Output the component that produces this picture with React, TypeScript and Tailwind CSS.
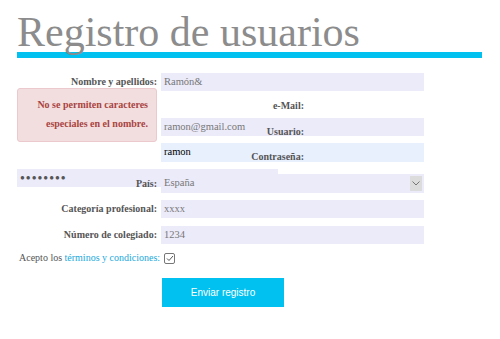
import React from "react";

const serifCls = "font-['Liberation_Serif','Times_New_Roman',serif]";

function Label({ children, className = "" }: { children: React.ReactNode; className?: string }) {
  return (
    <span className={`${serifCls} text-[10px] font-bold text-[#555] leading-none whitespace-nowrap ${className}`}>
      {children}
    </span>
  );
}

function Field({ label, value }: { label: string; value: string }) {
  return (
    <div className="flex items-center h-[18px]">
      <div className="w-[144px] text-right pr-[4px] leading-none text-[10px]">
        <Label>{label}</Label>
      </div>
      <div className={`w-[263px] h-[18px] bg-[#ecebfa] flex items-center px-[3px] text-[10.5px] leading-none text-[#777] ${serifCls}`}>
        {value}
      </div>
    </div>
  );
}

export default function App() {
  return (
    <div className={`w-[500px] h-[339px] bg-white overflow-hidden px-[17px] ${serifCls}`}>
      <h1 className="text-[42px] leading-none text-[#8c8c8c] pt-[11px] whitespace-nowrap">Registro de usuarios</h1>
      <div className="h-[6px] w-[465px] bg-[#00c1ef] -mt-[1px]" />

      <div className="mt-[15px]">
        <Field label="Nombre y apellidos:" value="Ramón&" />

        <div className="flex">
          <div className="w-[140px] h-[54px] -mt-[3px] bg-[#f2dede] border border-[#ebc9cd] rounded-[3px] text-right pr-[8px] pt-[6px] text-[10px] font-bold text-[#a94442] leading-[19px] shrink-0">
            No se permiten caracteres
            <br />
            especiales en el nombre.
          </div>
          <div className="w-[263px] ml-[4px] leading-none">
            <div className="h-[27px] flex items-center justify-end pr-[120px] pt-[3px]">
              <Label>e-Mail:</Label>
            </div>
            <div className="relative h-[18px] bg-[#ecebfa] flex items-center px-[3px] text-[10.5px] text-[#777]">
              ramon@gmail.com
              <Label className="absolute right-[120px] top-[9px]">Usuario:</Label>
            </div>
            <div className="relative h-[19px] mt-[7px] bg-[#e8f0fe] flex items-center px-[3px] text-[10.5px] text-black">
              ramon
              <Label className="absolute right-[120px] top-[9px]">Contraseña:</Label>
            </div>
          </div>
        </div>

        <div className="relative h-[24px] mt-[7px] leading-none">
          <div className="absolute left-0 top-0 w-[261px] h-[18px] bg-[#ecebfa] flex items-center pl-[3px] text-[8px] tracking-[1px] text-[#555]">
            ●●●●●●●●
          </div>
          <div className="relative flex items-center pt-[5px]">
            <div className="w-[144px] text-right pr-[4px] text-[10px]">
              <Label>País:</Label>
            </div>
            <div className="w-[263px] h-[19px] bg-[#ecebfa] flex items-center justify-between pl-[3px] pr-[2px] text-[10.5px] text-[#777]">
              España
              <div className="w-[12px] h-[15px] bg-[#dcdcdc] flex items-center justify-center">
                <svg width="8" height="5" viewBox="0 0 8 5" fill="none">
                  <path d="M0.5 0.5 L4 4 L7.5 0.5" stroke="#777" strokeWidth="1" />
                </svg>
              </div>
            </div>
          </div>
        </div>

        <div className="mt-[7px] flex flex-col gap-[8px]">
          <Field label="Categoría profesional:" value="xxxx" />
          <Field label="Número de colegiado:" value="1234" />
        </div>

        <div className="flex items-center mt-[8px] pl-[2px] text-[10px] leading-none text-[#555] h-[12px]">
          <span>
            Acepto los <span className="text-[#1aa9dc]">términos y condiciones:</span>
          </span>
          <span className="ml-[4px] w-[11px] h-[11px] border border-[#777] rounded-[2px] flex items-center justify-center">
            <svg width="8" height="7" viewBox="0 0 8 7" fill="none">
              <path d="M1 3.5 L3 5.5 L7 1" stroke="#555" strokeWidth="1" />
            </svg>
          </span>
        </div>

        <div className="pl-[145px] mt-[14px]">
          <button className="w-[122px] h-[29px] bg-[#00c1ef] text-white text-[10px] font-['Liberation_Sans',Arial,sans-serif]">
            Enviar registro
          </button>
        </div>
      </div>
    </div>
  );
}
